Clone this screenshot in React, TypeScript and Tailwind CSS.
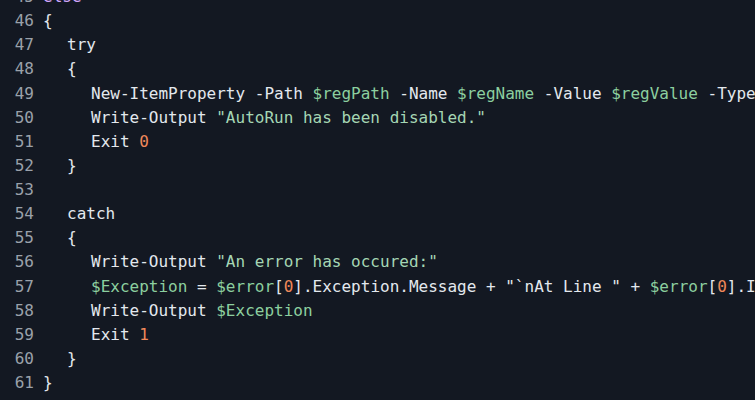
import React from "react";

type Tok = { t: string; c?: string };

const KW = "text-[#d2a8ff]";
const VAR = "text-[#8ccf9f]";
const STR = "text-[#a5d6b4]";
const NUM = "text-[#f0885a]";

const lines: { n: number; indent: number; toks: Tok[] }[] = [
  { n: 45, indent: 0, toks: [{ t: "else", c: KW }] },
  { n: 46, indent: 0, toks: [{ t: "{" }] },
  { n: 47, indent: 1, toks: [{ t: "try" }] },
  { n: 48, indent: 1, toks: [{ t: "{" }] },
  {
    n: 49,
    indent: 2,
    toks: [
      { t: "New-ItemProperty -Path " },
      { t: "$regPath", c: VAR },
      { t: " -Name " },
      { t: "$regName", c: VAR },
      { t: " -Value " },
      { t: "$regValue", c: VAR },
      { t: " -Type DWord -Force" },
    ],
  },
  {
    n: 50,
    indent: 2,
    toks: [{ t: "Write-Output " }, { t: '"AutoRun has been disabled."', c: STR }],
  },
  { n: 51, indent: 2, toks: [{ t: "Exit " }, { t: "0", c: NUM }] },
  { n: 52, indent: 1, toks: [{ t: "}" }] },
  { n: 53, indent: 0, toks: [] },
  { n: 54, indent: 1, toks: [{ t: "catch" }] },
  { n: 55, indent: 1, toks: [{ t: "{" }] },
  {
    n: 56,
    indent: 2,
    toks: [{ t: "Write-Output " }, { t: '"An error has occured:"', c: STR }],
  },
  {
    n: 57,
    indent: 2,
    toks: [
      { t: "$Exception", c: VAR },
      { t: " = " },
      { t: "$error", c: VAR },
      { t: "[" },
      { t: "0", c: NUM },
      { t: "].Exception.Message + \"`nAt Line \" + " },
      { t: "$error", c: VAR },
      { t: "[" },
      { t: "0", c: NUM },
      { t: "].InvocationInfo.ScriptLineNumber" },
    ],
  },
  {
    n: 58,
    indent: 2,
    toks: [{ t: "Write-Output " }, { t: "$Exception", c: VAR }],
  },
  { n: 59, indent: 2, toks: [{ t: "Exit " }, { t: "1", c: NUM }] },
  { n: 60, indent: 1, toks: [{ t: "}" }] },
  { n: 61, indent: 0, toks: [{ t: "}" }] },
];

const indents = ["ml-0", "ml-[24px]", "ml-[48px]"];

export default function App() {
  return (
    <div className="w-[755px] h-[400px] overflow-hidden bg-[#131822] font-['DejaVu_Sans_Mono',monospace] text-[16px] leading-[24.13px]">
      <div className="mt-[-15px] flex flex-col">
        {lines.map((l) => (
          <div key={l.n} className="flex whitespace-pre">
            <span className="w-[34px] shrink-0 text-right text-[#9aa1aa]">{l.n}</span>
            <span className="pl-[9px] text-[#e3e8ee]">
              <span className={indents[l.indent]}>
                {l.toks.map((tk, i) => (
                  <span key={i} className={tk.c}>
                    {tk.t}
                  </span>
                ))}
              </span>
            </span>
          </div>
        ))}
      </div>
    </div>
  );
}
